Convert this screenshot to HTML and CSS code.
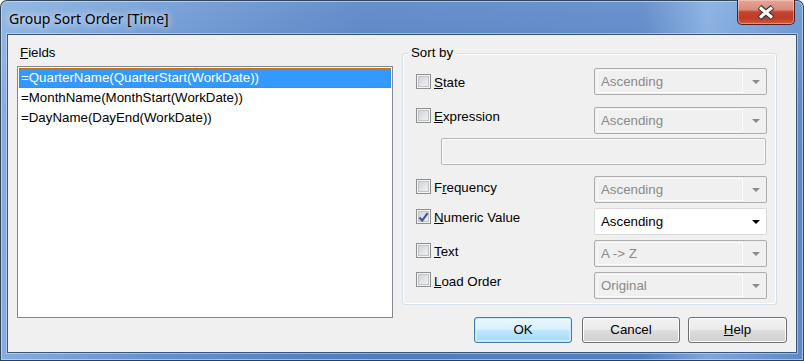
FILE: index.html
```html
<!DOCTYPE html>
<html>
<head>
<meta charset="utf-8">
<title>Group Sort Order [Time]</title>
<link rel="stylesheet" href="styles.css">
</head>
<body>
<div class="window">
  <div class="titlebar">
    <span class="title">Group Sort Order [Time]</span>
    <div class="close">
      <svg width="20" height="15" viewBox="0 0 20 15">
        <path d="M3.5 2 L16.5 13 M16.5 2 L3.5 13" stroke="#363636" stroke-width="5.5" fill="none"/>
        <path d="M4 2.6 L16 12.4 M16 2.6 L4 12.4" stroke="#ffffff" stroke-width="3.2" fill="none"/>
      </svg>
    </div>
  </div>
  <div class="client">
    <div class="left">
      <div class="label"><u>F</u>ields</div>
      <div class="listbox">
        <div class="item sel">=QuarterName(QuarterStart(WorkDate))</div>
        <div class="item">=MonthName(MonthStart(WorkDate))</div>
        <div class="item">=DayName(DayEnd(WorkDate))</div>
      </div>
    </div>
    <div class="right">
      <div class="group">
        <span class="legend">Sort by</span>
        <div class="row r-state">
          <div class="check"><span class="cb"></span><span class="txt"><u>S</u>tate</span></div>
          <div class="combo dis"><span class="val">Ascending</span><span class="arrow"></span></div>
        </div>
        <div class="row r-expr">
          <div class="check"><span class="cb"></span><span class="txt"><u>E</u>xpression</span></div>
          <div class="combo dis"><span class="val">Ascending</span><span class="arrow"></span></div>
        </div>
        <div class="edit"></div>
        <div class="row r-freq">
          <div class="check"><span class="cb"></span><span class="txt">F<u>r</u>equency</span></div>
          <div class="combo dis"><span class="val">Ascending</span><span class="arrow"></span></div>
        </div>
        <div class="row r-num">
          <div class="check"><span class="cb on">
            <svg width="11" height="11" viewBox="0 0 11 11"><path d="M1.5 5.5 L4.2 8.6 L9.6 1.2" stroke="#3b5a9a" stroke-width="2.2" fill="none"/></svg>
          </span><span class="txt"><u>N</u>umeric Value</span></div>
          <div class="combo"><span class="val">Ascending</span><span class="arrow"></span></div>
        </div>
        <div class="row r-text">
          <div class="check"><span class="cb"></span><span class="txt"><u>T</u>ext</span></div>
          <div class="combo dis"><span class="val">A -&gt; Z</span><span class="arrow"></span></div>
        </div>
        <div class="row r-load">
          <div class="check"><span class="cb"></span><span class="txt"><u>L</u>oad Order</span></div>
          <div class="combo dis"><span class="val">Original</span><span class="arrow"></span></div>
        </div>
      </div>
      <div class="buttons">
        <div class="btn def">OK</div>
        <div class="btn b-cancel">Cancel</div>
        <div class="btn b-help"><u>H</u>elp</div>
      </div>
    </div>
  </div>
</div>
</body>
</html>
```

FILE: styles.css
```css
* { box-sizing: border-box; }
html, body { margin: 0; padding: 0; background: #ffffff; }
body { width: 804px; height: 361px; overflow: hidden; }

.window {
  width: 804px;
  height: 361px;
  border: 1px solid #34465c;
  border-bottom-color: #2c3e58;
  border-radius: 7px 7px 0 0;
  background:
    linear-gradient(90deg, rgba(170,200,236,0.55) 0%, rgba(120,160,215,0.2) 20%, rgba(50,90,165,0.3) 45%, rgba(50,90,165,0.25) 80%, rgba(160,195,235,0.5) 88%, rgba(90,130,195,0.2) 100%),
    linear-gradient(180deg, #7ea6da 0%, #5d8ccd 30%, #5a89cb 70%, #5c8bd0 100%);
  box-shadow: inset 0 0 0 1px rgba(220,235,250,0.55);
  font-family: "Liberation Sans", Arial, sans-serif;
  font-size: 13.3px;
  color: #000;
}

.titlebar {
  height: 33px;
  display: flex;
  align-items: flex-start;
}
.title {
  margin: 9px 0 0 8px;
  font-family: "Noto Sans", "DejaVu Sans", sans-serif;
  font-size: 14px;
  line-height: 18px;
  color: #000;
  text-shadow: 0 0 6px rgba(235,245,255,0.9), 0 0 10px rgba(235,245,255,0.7);
}
.close {
  margin: -1px 0 0 auto;
  margin-right: 8px;
  width: 58px;
  height: 25px;
  border: 1px solid #5a1f18;
  border-top: none;
  border-radius: 0 0 5px 5px;
  background: linear-gradient(180deg, #e6a699 0%, #d98a7c 40%, #c4432f 50%, #bf3b26 75%, #d0583f 100%);
  box-shadow: inset 0 0 0 1px rgba(255,220,210,0.45);
  display: flex;
  align-items: center;
  justify-content: center;
  padding-top: 1px;
}

.client {
  margin-left: 6px;
  width: 790px;
  height: 319px;
  border: 1px solid #3d5676;
  background: #f0f0f0;
  box-shadow: 0 0 0 1px rgba(230,240,252,0.45);
  display: flex;
  padding-left: 9px;
}

.left { width: 376px; flex-shrink: 0; }
.label {
  margin: 10px 0 0 3px;
  height: 16px;
  line-height: 16px;
}
.listbox {
  margin-top: 5px;
  width: 376px;
  height: 252px;
  border: 1px solid #828790;
  background: #ffffff;
  padding: 1px 1px 0 1px;
}
.item {
  height: 20px;
  line-height: 20px;
  padding-left: 2px;
  white-space: nowrap;
}
.item.sel {
  background: #3399ff;
  color: #ffffff;
  outline: 1px dotted #cc6600;
  outline-offset: -1px;
}

.right {
  margin-left: 9px;
  width: 375px;
  flex-shrink: 0;
}
.group {
  position: relative;
  margin-top: 18px;
  height: 252px;
  border: 1px solid #d5dfe5;
  border-radius: 3px;
  box-shadow: inset 0 0 0 1px #ffffff;
  padding: 14px 9px 0 13px;
}
.legend {
  position: absolute;
  top: -9px;
  left: 5px;
  padding: 0 3px;
  background: #f0f0f0;
  line-height: 16px;
}

.row {
  display: flex;
  align-items: flex-start;
  height: 27px;
  margin-top: 5px;
}
.r-state { margin-top: 0; }
.r-expr { margin-top: 12px; }
.r-freq { margin-top: 11px; }

.check {
  display: flex;
  align-items: center;
  height: 15px;
}
.r-state .check { margin-top: 6px; }
.r-expr .check { margin-top: 1px; }
.r-freq .check { margin-top: 3px; }
.r-num .check { margin-top: 1px; }
.r-text .check { margin-top: 3px; }
.r-load .check { margin-top: 0; }
.r-load .txt { margin-top: 4px; }

.cb {
  width: 15px;
  height: 15px;
  border: 1px solid #8f8f8f;
  background: linear-gradient(135deg, #c9ccd1 0%, #e4e5e7 55%, #f6f6f6 100%);
  box-shadow: inset 0 0 0 1px #f4f4f4, inset 0 0 0 2px #c0c3c8;
  display: flex;
  align-items: center;
  justify-content: center;
}
.cb.on { padding-top: 1px; }
.txt {
  margin-left: 3px;
  margin-top: 2px;
  line-height: 16px;
  white-space: nowrap;
}

.combo {
  margin-left: auto;
  width: 173px;
  height: 27px;
  border: 1px solid #d9d9d9;
  border-radius: 2px;
  background: #ffffff;
  display: flex;
  align-items: center;
}
.combo.dis {
  border-color: #adadad;
  background: #f0f0f0;
}
.val {
  flex: 1;
  height: 23px;
  margin: 1px 0 1px 2px;
  padding-left: 3px;
  line-height: 22px;
  border: 1px solid transparent;
}
.combo.dis .val {
  color: #8a8a8a;
  border-color: #fbfbfb;
}
.arrow {
  width: 23px;
  height: 23px;
  display: flex;
  align-items: center;
  justify-content: center;
}
.arrow::after {
  content: "";
  border-left: 4px solid transparent;
  border-right: 4px solid transparent;
  border-top: 4px solid #000000;
  margin-left: 2px;
}
.combo.dis .arrow::after { border-top-color: #8a8a8a; }

.edit {
  margin: 4px 0 0 25px;
  width: 325px;
  height: 27px;
  border: 1px solid #b6b6b6;
  border-radius: 2px;
  background: #f0f0f0;
  box-shadow: inset 0 0 0 1px #fafafa;
}

.buttons {
  display: flex;
  margin-top: 12px;
  padding-left: 72px;
}
.btn {
  flex-shrink: 0;
  width: 98px;
  height: 26px;
  border: 1px solid #707070;
  border-radius: 3px;
  background: linear-gradient(180deg, #f2f2f2 0%, #ebebeb 48%, #dddddd 52%, #cfcfcf 100%);
  box-shadow: inset 0 0 0 1px #fcfcfc;
  text-align: center;
  line-height: 23px;
}
.btn.def {
  border-color: #3c7fb1;
  background: linear-gradient(180deg, #eaf6fd 0%, #d9f0fc 48%, #bee6fd 52%, #a7d9f5 100%);
  box-shadow: inset 0 0 0 1px #c4e8fa, inset 0 0 0 2px rgba(255,255,255,0.4);
}
.b-cancel { margin-left: 10px; }
.b-help { margin-left: 8px; width: 99px; }
```
